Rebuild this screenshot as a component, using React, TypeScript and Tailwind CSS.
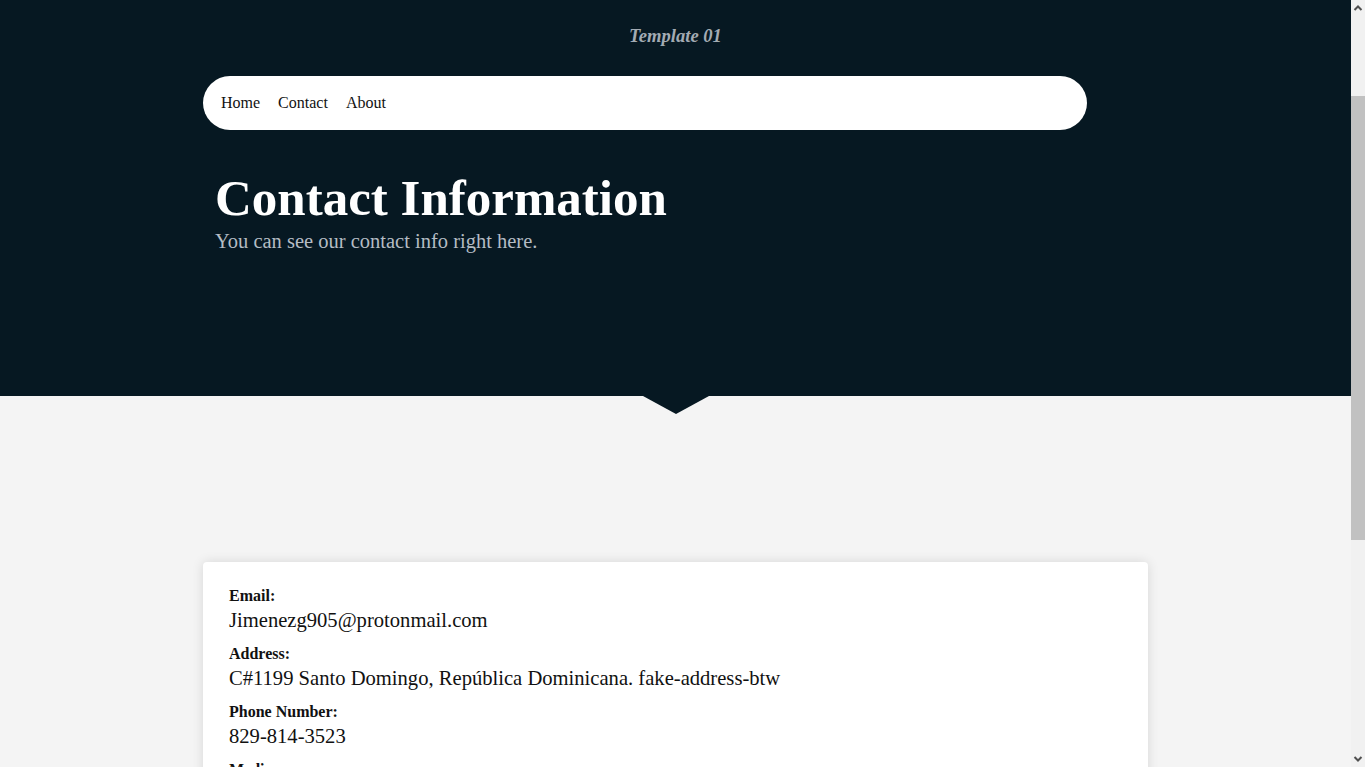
import React from "react";

const serif = { fontFamily: '"Liberation Serif", "Times New Roman", serif' };

type Item = { label: string; value: string };

const ITEMS: Item[] = [
  { label: "Email:", value: "Jimenezg905@protonmail.com" },
  { label: "Address:", value: "C#1199 Santo Domingo, República Dominicana. fake-address-btw" },
  { label: "Phone Number:", value: "829-814-3523" },
  { label: "Media:", value: "@jimenezg905" },
];

function Header() {
  return (
    <header className="relative bg-[#061822] h-[396px]">
      <p className="pt-[24px] text-center text-[18.6px] font-bold italic text-[#a3abb3] leading-[24px]">
        Template 01
      </p>
      <div className="w-[945px] mx-auto pt-[28px]">
        <nav className="w-[884px] h-[54px] bg-white rounded-full flex items-center gap-[18px] px-[18px] text-[16px] text-[#111]">
          <a href="#">Home</a>
          <a href="#">Contact</a>
          <a href="#">About</a>
        </nav>
        <div className="px-[12px] pt-[38px]">
          <h1 className="text-[51px] font-bold text-white leading-[60px]">Contact Information</h1>
          <p className="text-[20.5px] text-[#b4bcc4] leading-[27px]">You can see our contact info right here.</p>
        </div>
      </div>
      <div className="absolute left-1/2 -translate-x-1/2 top-full w-0 h-0 border-l-[33px] border-r-[33px] border-t-[18px] border-l-transparent border-r-transparent border-t-[#061822]" />
    </header>
  );
}

// stand-in for the browser scrollbar seen in the capture
function Scrollbar() {
  return (
    <div className="fixed right-0 top-0 h-screen w-[14px] bg-[#f1f1f1] flex flex-col items-center">
      <svg width="14" height="17" viewBox="0 0 14 17" className="shrink-0">
        <path d="M3.5 10 L7 6.5 L10.5 10" fill="none" stroke="#505050" strokeWidth="2" />
      </svg>
      <div className="mt-[79px] w-[14px] h-[444px] bg-[#c1c1c1]" />
      <div className="flex-1" />
      <svg width="14" height="17" viewBox="0 0 14 17" className="shrink-0">
        <path d="M3.5 7 L7 10.5 L10.5 7" fill="none" stroke="#505050" strokeWidth="2" />
      </svg>
    </div>
  );
}

export default function App() {
  return (
    <div style={serif} className="min-h-screen bg-[#f4f4f4]">
      <div className="mr-[14px]">
        <Header />
        <main className="w-[945px] mx-auto pt-[166px] pb-[120px]">
          <section className="bg-white rounded-[4px] shadow-[0_0_12px_rgba(0,0,0,0.12)] px-[26px] pt-[24px] pb-[28px] text-[#111]">
            {ITEMS.map((it) => (
              <div key={it.label} className="mb-[9px]">
                <p className="text-[16px] font-bold leading-[20px]">{it.label}</p>
                <p className="text-[20.6px] leading-[29px]">{it.value}</p>
              </div>
            ))}
          </section>
        </main>
        <footer className="bg-[#061822] py-[28px] text-center text-[16px] text-[#a3abb3]">
          Template 01 &copy; 2021
        </footer>
      </div>
      <Scrollbar />
    </div>
  );
}
